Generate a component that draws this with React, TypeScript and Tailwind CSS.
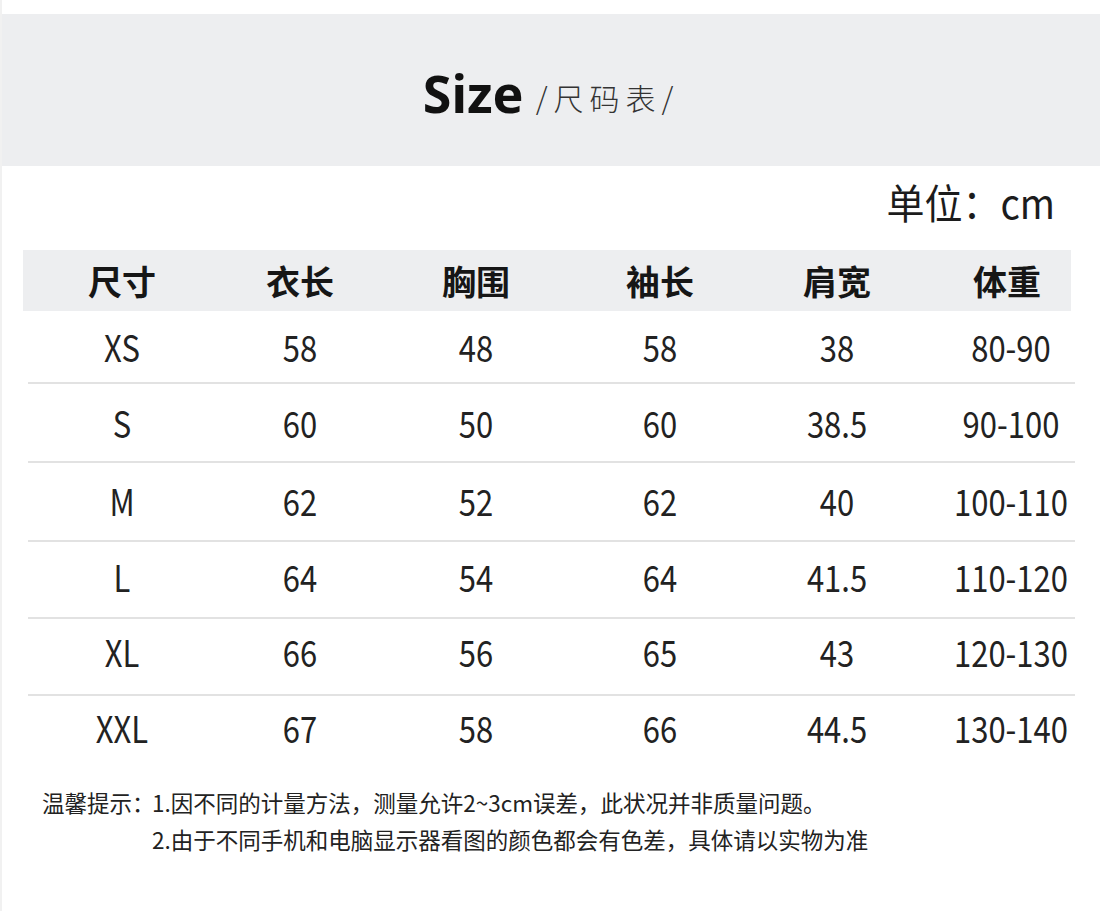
const cjk = "font-['Noto_Sans_CJK_SC','Noto_Sans',sans-serif]";

const headers = ["尺寸", "衣长", "胸围", "袖长", "肩宽", "体重"];

const rows = [
  { size: "XS", values: ["58", "48", "58", "38", "80-90"], h: "h-[71px]", nudge: "" },
  { size: "S", values: ["60", "50", "60", "38.5", "90-100"], h: "h-[77px]", nudge: "" },
  { size: "M", values: ["62", "52", "62", "40", "100-110"], h: "h-[77px]", nudge: "pb-[2px]" },
  { size: "L", values: ["64", "54", "64", "41.5", "110-120"], h: "h-[75px]", nudge: "pb-[6px]" },
  { size: "XL", values: ["66", "56", "65", "43", "120-130"], h: "h-[75px]", nudge: "pb-[10px]" },
  { size: "XXL", values: ["67", "58", "66", "44.5", "130-140"], h: "h-[74px]", nudge: "pb-[12px]" },
];

// column boxes tuned so each label sits on the same centre as the picture
const cols = "grid grid-cols-[188px_178px_174px_194px_160px_1fr]";
const cellPad = ["pl-[10px]", "", "", "", "", "pl-[30px]"];

function Cell({ text, i }: { text: string; i: number }) {
  return (
    <div className={`flex items-center justify-center ${cellPad[i]}`}>
      <span className="inline-block scale-y-[1.18] text-[31px] leading-none text-[#222]">{text}</span>
    </div>
  );
}

export default function App() {
  return (
    <div className={`w-[1100px] h-[911px] bg-white border-l-2 border-[#f1f1f1] pt-[14px] ${cjk}`}>
      {/* title band */}
      <div className="h-[152px] bg-[#edeef0] flex items-center justify-center pt-[6px]">
        <span className="font-['Noto_Sans',sans-serif] font-bold text-[52px] leading-none text-[#111]">Size</span>
        <span className="ml-[12px] mt-[8px] text-[30px] leading-none tracking-[6px] font-light text-[#333]">/尺码表/</span>
      </div>

      {/* unit */}
      <div className="h-[72px] flex items-center justify-end pr-[45px]">
        <span className="inline-block scale-y-[1.08] text-[38px] leading-none text-[#1c1c1c]">单位：cm</span>
      </div>

      {/* table */}
      <div className="mt-[12px] ml-[21px] w-[1052px]">
        <div className={`${cols} w-[1048px] h-[61px] bg-[#edeef0]`}>
          {headers.map((t, i) => (
            <div key={t} className={`flex items-center justify-center ${i === 5 ? "pl-[26px]" : cellPad[i]}`}>
              <span className="text-[34px] leading-none font-bold text-[#161616]">{t}</span>
            </div>
          ))}
        </div>
        {rows.map((r, idx) => (
          <div key={r.size}>
            <div className={`${cols} ${r.h} ${r.nudge}`}>
              {[r.size, ...r.values].map((v, i) => (
                <Cell key={i} text={v} i={i} />
              ))}
            </div>
            {idx < rows.length - 1 && <div className="ml-[5px] w-[1047px] h-[2px] bg-[#e2e2e2]" />}
          </div>
        ))}
      </div>

      {/* notes */}
      <div className="mt-[14px] pl-[40px] flex text-[22.5px] leading-[37px] text-[#222]">
        <span className="w-[110px] shrink-0 whitespace-nowrap">温馨提示：</span>
        <div className="flex flex-col whitespace-nowrap">
          <span>1.因不同的计量方法，测量允许2~3cm误差，此状况并非质量问题。</span>
          <span>2.由于不同手机和电脑显示器看图的颜色都会有色差，具体请以实物为准</span>
        </div>
      </div>
    </div>
  );
}
